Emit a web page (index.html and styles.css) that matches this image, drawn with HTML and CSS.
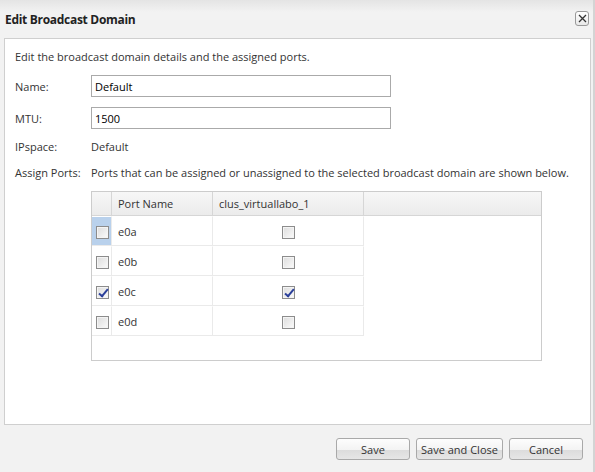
FILE: index.html
```html
<!DOCTYPE html>
<html lang="en">
<head>
  <meta charset="UTF-8" />
  <title>Edit Broadcast Domain</title>
  <link rel="stylesheet" href="styles.css">
</head>
<body>
  <div class="dialog">
    <div class="dialog-header">
      <h1>Edit Broadcast Domain</h1>
      <button class="close-button">
        <svg width="9" height="9" viewBox="0 0 9 9"><path d="M1 1L8 8M8 1L1 8" stroke="#333" stroke-width="1.3"/></svg>
      </button>
    </div>

    <div class="dialog-body">
      <p class="intro">Edit the broadcast domain details and the assigned ports.</p>

      <div class="form-row">
        <label>Name:</label>
        <input type="text" value="Default">
      </div>
      <div class="form-row">
        <label>MTU:</label>
        <input type="text" value="1500">
      </div>
      <div class="form-row text-row">
        <label>IPspace:</label>
        <span>Default</span>
      </div>
      <div class="form-row text-row">
        <label>Assign Ports:</label>
        <span>Ports that can be assigned or unassigned to the selected broadcast domain are shown below.</span>
      </div>

      <div class="ports-grid">
        <table>
          <thead>
            <tr>
              <th class="col-check"></th>
              <th class="col-name">Port Name</th>
              <th class="col-node">clus_virtuallabo_1</th>
              <th class="col-rest"></th>
            </tr>
          </thead>
          <tbody>
            <tr>
              <td class="col-check selected"><span class="checkbox"></span></td>
              <td>e0a</td>
              <td class="center"><span class="checkbox"></span></td>
            </tr>
            <tr>
              <td class="col-check"><span class="checkbox"></span></td>
              <td>e0b</td>
              <td class="center"><span class="checkbox"></span></td>
            </tr>
            <tr>
              <td class="col-check"><span class="checkbox checked"></span></td>
              <td>e0c</td>
              <td class="center"><span class="checkbox checked"></span></td>
            </tr>
            <tr>
              <td class="col-check"><span class="checkbox"></span></td>
              <td>e0d</td>
              <td class="center"><span class="checkbox"></span></td>
            </tr>
          </tbody>
        </table>
      </div>
    </div>

    <div class="dialog-footer">
      <button class="btn">Save</button>
      <button class="btn wide">Save and Close</button>
      <button class="btn">Cancel</button>
    </div>
  </div>
</body>
</html>
```

FILE: styles.css
```css
* {
  box-sizing: border-box;
  margin: 0;
  padding: 0;
}

body {
  font-family: 'Open Sans', sans-serif;
  font-size: 11px;
  color: #333;
  background: #f2f2f2;
}

.dialog {
  width: 595px;
  height: 472px;
  background: linear-gradient(#e4e4e4, #f2f2f2 12px);
  border-right: 2px solid #d4d4d4;
}

.dialog-header {
  height: 38px;
  display: flex;
  align-items: center;
  justify-content: space-between;
  padding: 0 4px 0 5px;
}

.dialog-header h1 {
  font-size: 12px;
  font-weight: bold;
  color: #222;
  letter-spacing: -0.3px;
}

.close-button {
  width: 14px;
  height: 15px;
  border: 1px solid #999;
  border-radius: 3px;
  background: linear-gradient(#fff, #e8e8e8);
  display: flex;
  align-items: center;
  justify-content: center;
  margin-top: -1px;
}

.dialog-body {
  margin: 0 2px 0 4px;
  height: 387px;
  background: #fff;
  border: 1px solid #cfcfcf;
  padding: 10px 10px;
}

.intro {
  line-height: 16px;
  margin-bottom: 10px;
}

.form-row {
  display: grid;
  grid-template-columns: 76px 1fr;
  align-items: center;
  margin-bottom: 10px;
}

.form-row input {
  width: 300px;
  height: 22px;
  border: 1px solid #aaa;
  padding: 0 3px;
  font-family: 'Open Sans', sans-serif;
  font-size: 11px;
  color: #000;
}

.text-row {
  line-height: 16px;
  margin-bottom: 10px;
}

.ports-grid {
  margin: 1px 0 0 76px;
  width: 451px;
  height: 170px;
  border: 1px solid #cccccc;
}

.ports-grid table {
  border-collapse: separate;
  border-spacing: 0;
  width: 449px;
}

.ports-grid th {
  height: 24px;
  text-align: left;
  font-weight: normal;
  padding: 0 6px;
  background: linear-gradient(#f7f7f7, #ebebeb);
  border-right: 1px solid #d6d6d6;
  border-bottom: 1px solid #d6d6d6;
}

.ports-grid th.col-rest {
  width: 177px;
  border-right: none;
}

.col-check {
  width: 20px;
}

.col-name {
  width: 101px;
}

.col-node {
  width: 151px;
}

.ports-grid td {
  height: 30px;
  padding: 0 6px;
  border-right: 1px solid #eaeaea;
  border-bottom: 1px solid #eaeaea;
  border-top: 1px solid #fff;
}

.ports-grid td.col-check {
  padding: 0 0 0 4px;
}

.ports-grid td.selected {
  background: #b9d1ec;
}

.ports-grid td.center {
  text-align: center;
}

.checkbox {
  display: inline-block;
  width: 13px;
  height: 13px;
  border: 1px solid #8c8c8c;
  background: linear-gradient(135deg, #dcdcdc, #fbfbfb);
  box-shadow: inset 0 0 0 1px #f4f4f4;
  vertical-align: middle;
  position: relative;
}

.checkbox.checked::after {
  content: "";
  position: absolute;
  left: 4px;
  top: 0px;
  width: 3px;
  height: 8px;
  border: solid #2a3f9a;
  border-width: 0 2px 2px 0;
  transform: rotate(40deg);
}

.dialog-footer {
  display: flex;
  justify-content: flex-end;
  gap: 6px;
  padding: 13px 10px 0 0;
}

.btn {
  width: 74px;
  height: 22px;
  border: 1px solid #a9a9a9;
  border-radius: 3px;
  background: linear-gradient(#fdfdfd 0%, #f3f3f3 55%, #dcdcdc 56%, #e6e6e6 100%);
  font-family: 'Open Sans', sans-serif;
  font-size: 11px;
  color: #333;
}

.btn.wide {
  width: 87px;
}
```
